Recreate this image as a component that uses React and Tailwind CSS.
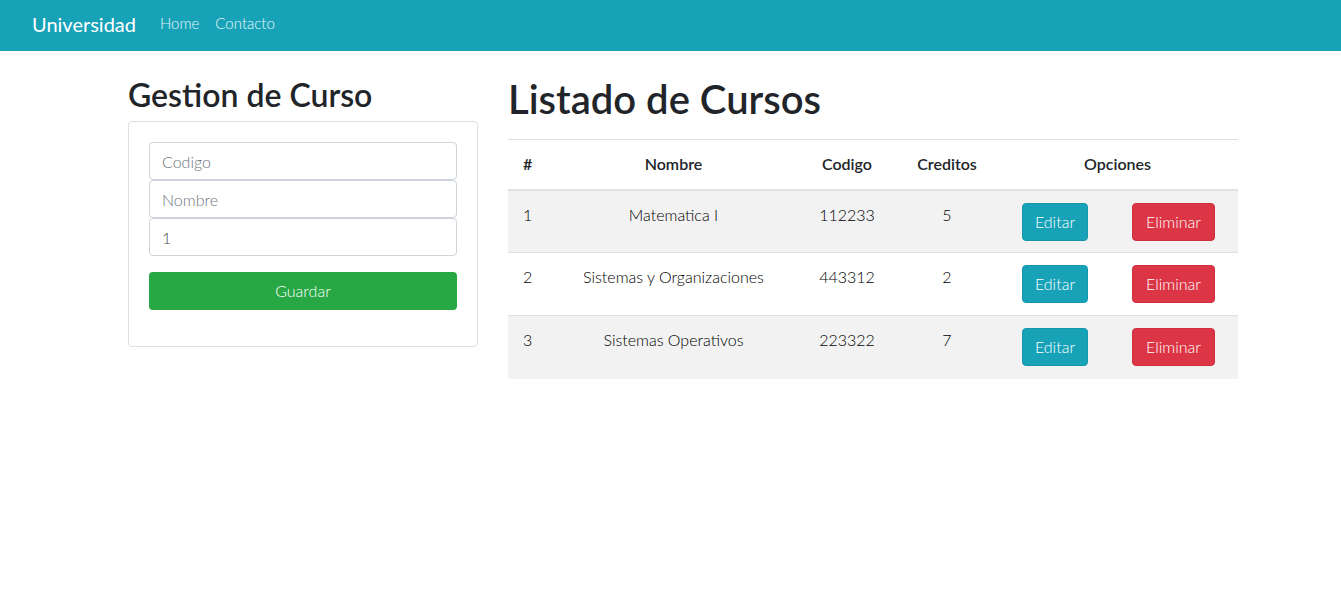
import { useState } from 'react';

const cursos = [
  { id: 1, nombre: 'Matematica I', codigo: '112233', creditos: 5 },
  { id: 2, nombre: 'Sistemas y Organizaciones', codigo: '443312', creditos: 2 },
  { id: 3, nombre: 'Sistemas Operativos', codigo: '223322', creditos: 7 },
];

function App() {
  const [form, setForm] = useState({ codigo: '', nombre: '', creditos: '1' });

  const handleChange = (e) => {
    setForm({ ...form, [e.target.name]: e.target.value });
  };

  return (
    <div className="min-h-screen bg-white text-[#212529] font-['Lato','Liberation_Sans',sans-serif]">
      <nav className="h-[51px] bg-[#17a2b8] flex items-center px-8 pb-[4px]">
        <a className="text-white text-[20px] mr-6 leading-none">Universidad</a>
        <div className="flex gap-4 text-[15px] text-white/90 font-light leading-none">
          <a>Home</a>
          <a>Contacto</a>
        </div>
      </nav>

      <div className="pl-[128px]">
        <div className="w-[1110px] flex gap-[30px] pt-[25px]">
          <div className="w-[350px] shrink-0">
            <h2 className="text-[32px] font-semibold leading-[1.2] mb-[7px]">Gestion de Curso</h2>
            <div className="border border-[#dfdfdf] rounded p-5 pb-9">
              <form onSubmit={(e) => e.preventDefault()}>
                <input
                  name="codigo"
                  value={form.codigo}
                  onChange={handleChange}
                  placeholder="Codigo"
                  className="block w-full h-[38px] px-3 border border-[#ced4da] rounded text-[16px] font-light placeholder:text-[#6c757d] outline-none"
                />
                <input
                  name="nombre"
                  value={form.nombre}
                  onChange={handleChange}
                  placeholder="Nombre"
                  className="block w-full h-[38px] px-3 border border-[#ced4da] rounded text-[16px] font-light placeholder:text-[#6c757d] outline-none"
                />
                <input
                  name="creditos"
                  value={form.creditos}
                  onChange={handleChange}
                  className="block w-full h-[38px] px-3 border border-[#ced4da] rounded text-[16px] font-light text-[#495057] outline-none"
                />
                <button type="submit" className="mt-4 w-full h-[38px] bg-[#28a745] text-white rounded text-[16px] font-light">
                  Guardar
                </button>
              </form>
            </div>
          </div>

          <div className="flex-1">
            <h1 className="text-[40px] font-semibold leading-[1.2] mb-[16px] -mt-[1px]">Listado de Cursos</h1>
            <table className="w-full border-collapse text-[16px]">
              <thead>
                <tr className="border-t border-[#dee2e6] border-b-2 h-[50px]">
                  <th className="w-[42px] pl-[15px] text-left font-semibold">#</th>
                  <th className="w-[247px] font-semibold">Nombre</th>
                  <th className="w-[100px] font-semibold">Codigo</th>
                  <th className="w-[100px] font-semibold">Creditos</th>
                  <th className="font-semibold">Opciones</th>
                </tr>
              </thead>
              <tbody className="font-light text-black">
                {cursos.map((curso, i) => (
                  <tr key={curso.id} className={`h-[63px] border-t border-[#dee2e6] ${i % 2 === 0 ? 'bg-[#f2f2f2]' : ''}`}>
                    <td className="pl-[15px] pt-[12px] align-top">{curso.id}</td>
                    <td className="text-center pt-[12px] align-top">{curso.nombre}</td>
                    <td className="text-center pt-[12px] align-top">{curso.codigo}</td>
                    <td className="text-center pt-[12px] align-top">{curso.creditos}</td>
                    <td className="align-top pt-[12px]">
                      <div className="flex pl-[25px] gap-[44px]">
                        <button className="w-[66px] h-[38px] bg-[#17a2b8] border border-[#1596aa] text-white rounded font-light">Editar</button>
                        <button className="w-[83px] h-[38px] bg-[#dc3545] border border-[#cf2e3e] text-white rounded font-light">Eliminar</button>
                      </div>
                    </td>
                  </tr>
                ))}
              </tbody>
            </table>
          </div>
        </div>
      </div>
    </div>
  );
}

export default App;
